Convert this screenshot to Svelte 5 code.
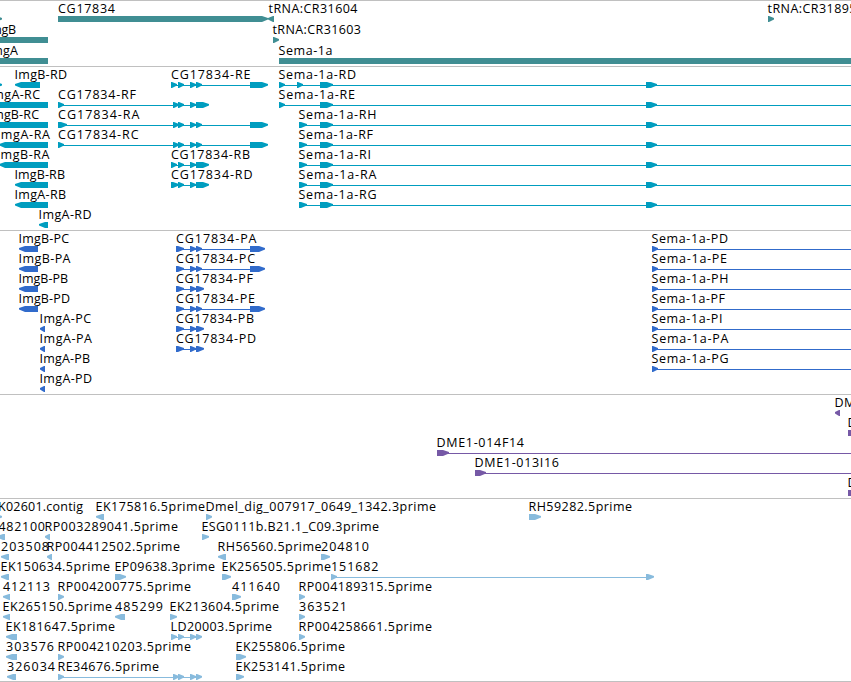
<script>
	const WIDTH = 851;

	// helper: label, label start, label end, blocks, options
	function f(label, x, end, blocks, opts = {}) {
		return { label, x, end, blocks, dir: 1, ...opts };
	}

	const left = { dir: -1 };
	const open = { to: 900 };
	const exons = [[178, 184], [190, 196]];
	const longTail = [[173, 179], ...exons, [196, 202], [250, 268]];
	const sema = [[320, 333], [646, 657]];
	const cdsShort = [[176, 184], [190, 196], [196, 204]];
	const cdsLong = [[176, 184], [190, 196], [196, 202], [250, 265]];

	const tracks = [
		{
			name: 'genes', color: '#408e93', pitch: 21, height: 66,
			rows: [
				[
					f('', 0, 0, [[-8, 2]]),
					f('CG17834', 57.5, 115, [[58, 268]]),
					f('tRNA:CR31604', 268, 357.5, [[268, 274]], left),
					f('tRNA:CR31895', 767, 856.5, [[768, 774]])
				],
				[
					f('ImgB', -13.5, 16, [[-20, 48]], left),
					f('tRNA:CR31603', 272, 361, [[273, 279]])
				],
				[
					f('ImgA', -13, 18, [[-20, 48]], left),
					f('Sema-1a', 278, 332.5, [[279, 900]])
				]
			]
		},
		{
			name: 'transcripts', color: '#009dbf', pitch: 20, height: 164,
			rows: [
				[
					f('', 0, 0, [[-8, 2]]),
					f('ImgB-RD', 14, 67, [[15, 40]], left),
					f('CG17834-RE', 170.5, 250.5, [[171, 177], ...exons, [196, 202], [250, 268]]),
					f('Sema-1a-RD', 278, 356, [[279, 285], [297, 303], ...sema], open)
				],
				[
					f('ImgA-RC', -12, 40, [[-20, 48]], left),
					f('CG17834-RF', 57.5, 136, [[58, 64], [173, 179], ...exons, [196, 209]]),
					f('Sema-1a-RE', 278, 355, [[279, 285], ...sema], open)
				],
				[
					f('ImgB-RC', -12, 39, [[-20, 48]], left),
					f('CG17834-RA', 57.5, 139.5, [[58, 67], ...longTail]),
					f('Sema-1a-RH', 298, 376.5, [[299, 307], ...sema], open)
				],
				[
					f('ImgA-RA', -4, 50, [[-1, 48]], left),
					f('CG17834-RC', 57.5, 138.5, [[58, 64], ...longTail]),
					f('Sema-1a-RF', 298, 373, [[299, 307], ...sema], open)
				],
				[
					f('ImgB-RA', -4, 49.5, [[-1, 48]], left),
					f('CG17834-RB', 170.5, 250, [[171, 177], ...exons, [196, 209]]),
					f('Sema-1a-RI', 298, 371, [[299, 307], ...sema], open)
				],
				[
					f('ImgB-RB', 14, 65, [[15, 48]], left),
					f('CG17834-RD', 170.5, 252.5, [[171, 179], ...exons, [196, 209]]),
					f('Sema-1a-RA', 298, 376.5, [[299, 307], ...sema], open)
				],
				[
					f('ImgA-RB', 14, 66, [[15, 48]], left),
					f('Sema-1a-RG', 298, 376.5, [[299, 307], ...sema], open)
				],
				[f('ImgA-RD', 38, 91.5, [[39, 48]], left)]
			]
		},
		{
			name: 'proteins', color: '#316bcb', pitch: 20, height: 164,
			rows: [
				[
					f('ImgB-PC', 18, 69, [[19, 38]], left),
					f('CG17834-PA', 175.5, 256.5, cdsLong),
					f('Sema-1a-PD', 651, 728, [[652, 658]], open)
				],
				[
					f('ImgB-PA', 18, 70.5, [[19, 38]], left),
					f('CG17834-PC', 175.5, 255, cdsLong),
					f('Sema-1a-PE', 651, 727, [[652, 658]], open)
				],
				[
					f('ImgB-PB', 18, 68, [[19, 38]], left),
					f('CG17834-PF', 175.5, 253, cdsShort),
					f('Sema-1a-PH', 651, 728.5, [[652, 658]], open)
				],
				[
					f('ImgB-PD', 18, 70, [[19, 38]], left),
					f('CG17834-PE', 175.5, 255, cdsLong),
					f('Sema-1a-PF', 651, 725, [[652, 658]], open)
				],
				[
					f('ImgA-PC', 39, 91, [[40, 45]], left),
					f('CG17834-PB', 175.5, 254, cdsShort),
					f('Sema-1a-PI', 651, 722.5, [[652, 658]], open)
				],
				[
					f('ImgA-PA', 39, 92, [[40, 45]], left),
					f('CG17834-PD', 175.5, 256, cdsShort),
					f('Sema-1a-PA', 651, 728.5, [[652, 658]], open)
				],
				[
					f('ImgA-PB', 39, 90, [[40, 45]], left),
					f('Sema-1a-PG', 651, 728.5, [[652, 658]], open)
				],
				[f('ImgA-PD', 39, 92, [[40, 45]], left)]
			]
		},
		{
			name: 'clones', color: '#7659a6', pitch: 20, height: 104,
			rows: [
				[f('DME1', 834, 870, [[835, 840]], left)],
				[f('DME1', 847, 883, [[848, 858]])],
				[f('DME1-014F14', 436, 524, [[437, 449]], open)],
				[f('DME1-013I16', 474, 559, [[475, 486]], open)],
				[f('DME1', 847, 883, [[848, 858]])]
			]
		},
		{
			name: 'ests', color: '#88bbdd', pitch: 20, height: 183,
			rows: [
				[
					f('', 0, 0, [[-8, 2]]),
					f('K02601.contig', -2.5, 83, []),
					f('EK175816.5prime', 95, 205, [[96, 104]], left),
					f('Dmel_dig_007917_0649_1342.3prime', 205, 436, [[206, 212]]),
					f('RH59282.5prime', 528, 632, [[529, 541]])
				],
				[
					f('482100', -2, 45, [[-3, 5]], left),
					f('RP003289041.5prime', 44, 178, [[45, 50]], left),
					f('ESG0111b.B21.1_C09.3prime', 201, 379, [[202, 209]])
				],
				[
					f('203508', 0.5, 49, [[1, 9]], left),
					f('RP004412502.5prime', 46, 180, [[47, 52]], left),
					f('RH56560.5prime', 217, 321.5, [[218, 226]], left),
					f('204810', 320.5, 369, [[321, 330]])
				],
				[
					f('EK150634.5prime', 0, 110, [[1, 9]], left),
					f('EP09638.3prime', 114, 215, [[115, 126]]),
					f('EK256505.5prime', 221, 331, [[222, 231]]),
					f('151682', 330.5, 378.5, [[331, 337], [646, 654]])
				],
				[
					f('412113', 2.5, 50, [[3, 10]], left),
					f('RP004200775.5prime', 57, 191, [[58, 64]]),
					f('411640', 231.5, 280, [[232, 241]]),
					f('RP004189315.5prime', 298, 432, [[299, 305]])
				],
				[
					f('EK265150.5prime', 2, 112, [[3, 10]], left),
					f('485299', 114.5, 163, [[115, 125]], left),
					f('EK213604.5prime', 169, 279, [[170, 177]]),
					f('363521', 298.5, 347, [[299, 305]])
				],
				[
					f('EK181647.5prime', 5, 115, [[6, 17]], left),
					f('LD20003.5prime', 170, 272, [[171, 177], ...exons, [196, 202]]),
					f('RP004258661.5prime', 298, 432, [[299, 305]])
				],
				[
					f('303576', 5.5, 54, [[6, 17]], left),
					f('RP004210203.5prime', 57, 191, [[58, 64]]),
					f('EK255806.5prime', 235, 345, [[236, 246]])
				],
				[
					f('326034', 6.5, 55, [[7, 16]], left),
					f('RE34676.5prime', 57, 159, [[58, 64], [173, 179], ...exons, [196, 202]]),
					f('EK253141.5prime', 235, 345, [[236, 244]])
				]
			]
		}
	];

	// block with a pointed end, 6px high
	function shape([a, b], dir, y) {
		const head = Math.min(6, b - a - 1);
		if (dir > 0) {
			return `${a},${y} ${b - head},${y} ${b},${y + 2} ${b},${y + 3.4} ${b - head},${y + 6} ${a},${y + 6}`;
		}
		return `${b},${y} ${a + head},${y} ${a},${y + 2} ${a},${y + 3.4} ${a + head},${y + 6} ${b},${y + 6}`;
	}
</script>

<main class="browser">
	{#each tracks as track (track.name)}
		<section class="track">
			<svg width={WIDTH} height={track.height - 1} viewBox="0 1 {WIDTH} {track.height - 1}" fill={track.color}>
				{#each track.rows as row, i}
					{@const top = i * track.pitch}
					{#each row as item}
						{#if item.to || item.blocks.length > 1}
							{@const start = item.blocks[0][0]}
							{@const stop = item.to ?? item.blocks[item.blocks.length - 1][0]}
							<rect x={start} y={top + 19} width={stop - start} height="1" />
						{/if}
						{#each item.blocks as block}
							<polygon points={shape(block, item.dir, top + 16)} />
						{/each}
						{#if item.label}
							<text x={item.x + 0.5} y={top + 13} textLength={item.end - item.x - 0.5}>{item.label}</text>
						{/if}
					{/each}
				{/each}
			</svg>
		</section>
	{/each}
</main>

<style>
	:global(body) {
		margin: 0;
		background: #fff;
	}

	.browser {
		width: 851px;
		height: 681px;
		overflow: hidden;
		border-bottom: 1px solid #c0c0c0;
	}

	.track {
		border-top: 1px solid #c0c0c0;
	}

	svg {
		display: block;
		overflow: hidden;
	}

	text {
		font-family: 'Open Sans', 'DejaVu Sans', sans-serif;
		font-size: 12.5px;
		fill: #000;
	}
</style>
